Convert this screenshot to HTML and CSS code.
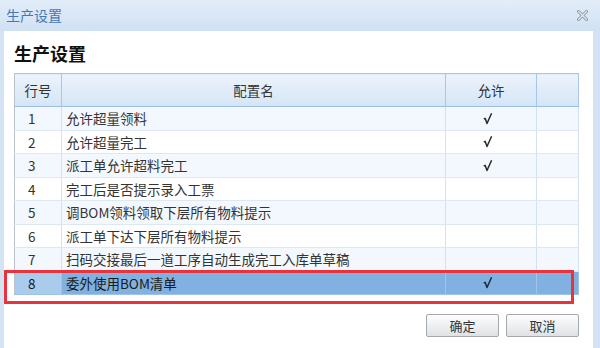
FILE: index.html
```html
<!DOCTYPE html>
<html lang="zh-CN">
  <head>
    <meta charset="UTF-8" />
    <title>生产设置</title>
    <link rel="stylesheet" href="styles.css">
  </head>
  <body>
    <div class="window">
      <div class="titlebar">
        <span class="win-title">生产设置</span>
        <svg class="close" width="11" height="11" viewBox="0 0 11 11">
          <path d="M1.5 1.5 L9.5 9.5 M9.5 1.5 L1.5 9.5" stroke="#8d949c" stroke-width="3" stroke-linecap="round" fill="none" />
          <path d="M1.5 1.5 L9.5 9.5 M9.5 1.5 L1.5 9.5" stroke="#e3ecf6" stroke-width="1.2" stroke-linecap="round" fill="none" />
        </svg>
      </div>
      <div class="panel">
        <div class="heading">生产设置</div>
        <table class="grid">
          <colgroup>
            <col class="c-no" />
            <col class="c-name" />
            <col class="c-ok" />
            <col class="c-pad" />
          </colgroup>
          <thead>
            <tr>
              <th>行号</th>
              <th>配置名</th>
              <th>允许</th>
              <th></th>
            </tr>
          </thead>
          <tbody>
            <tr class="alt"><td class="no">1</td><td>允许超量领料</td><td class="ok"><svg class="tick" width="10" height="13" viewBox="0 0 10 13"><path d="M0.8 7.2 L2.2 6.4 L4 11.5 L8.6 1.2" stroke="#2b2b2b" stroke-width="1.5" fill="none" stroke-linejoin="round" /></svg></td><td></td></tr>
            <tr><td class="no">2</td><td>允许超量完工</td><td class="ok"><svg class="tick" width="10" height="13" viewBox="0 0 10 13"><path d="M0.8 7.2 L2.2 6.4 L4 11.5 L8.6 1.2" stroke="#2b2b2b" stroke-width="1.5" fill="none" stroke-linejoin="round" /></svg></td><td></td></tr>
            <tr class="alt"><td class="no">3</td><td>派工单允许超料完工</td><td class="ok"><svg class="tick" width="10" height="13" viewBox="0 0 10 13"><path d="M0.8 7.2 L2.2 6.4 L4 11.5 L8.6 1.2" stroke="#2b2b2b" stroke-width="1.5" fill="none" stroke-linejoin="round" /></svg></td><td></td></tr>
            <tr><td class="no">4</td><td>完工后是否提示录入工票</td><td class="ok"></td><td></td></tr>
            <tr class="alt"><td class="no">5</td><td>调BOM领料领取下层所有物料提示</td><td class="ok"></td><td></td></tr>
            <tr><td class="no">6</td><td>派工单下达下层所有物料提示</td><td class="ok"></td><td></td></tr>
            <tr class="alt"><td class="no">7</td><td>扫码交接最后一道工序自动生成完工入库单草稿</td><td class="ok"></td><td></td></tr>
            <tr class="selected"><td class="no">8</td><td>委外使用BOM清单</td><td class="ok"><svg class="tick" width="10" height="13" viewBox="0 0 10 13"><path d="M0.8 7.2 L2.2 6.4 L4 11.5 L8.6 1.2" stroke="#1f2a38" stroke-width="1.5" fill="none" stroke-linejoin="round" /></svg></td><td></td></tr>
          </tbody>
        </table>
        <div class="mark"></div>
        <div class="actions">
          <button class="btn">确定</button>
          <button class="btn">取消</button>
        </div>
      </div>
    </div>
  </body>
</html>
```

FILE: styles.css
```css
body {
  margin: 0;
  background: #d4e3f4;
  font-family: "Noto Sans CJK SC", "Noto Sans", "Liberation Sans", sans-serif;
  color: #333;
}
.window {
  width: 600px;
  height: 348px;
  overflow: hidden;
  background: #d4e3f4;
}
.titlebar {
  height: 31px;
  display: flex;
  align-items: center;
  justify-content: space-between;
  padding: 0 12px 0 6px;
  background: linear-gradient(#e3edf9, #d0e1f3);
}
.win-title {
  font-size: 14px;
  color: #4178b8;
  margin-top: -2px;
}
.close {
  margin-top: -1px;
}
.panel {
  position: relative;
  margin: 0 7px 0 4px;
  height: 317px;
  background: #fff;
  padding: 10px 15px 0 10px;
  box-sizing: border-box;
}
.heading {
  font-size: 18px;
  font-weight: bold;
  line-height: 24px;
  color: #111;
  margin-bottom: 8px;
}
.grid {
  width: 564px;
  border-collapse: collapse;
  table-layout: fixed;
  font-size: 13.5px;
  border: 1px solid #b9c3ce;
}
.c-no { width: 47px; }
.c-name { width: 384px; }
.c-ok { width: 91px; }
.c-pad { width: 42px; }
.grid th {
  height: 32px;
  padding: 0;
  font-weight: normal;
  color: #333;
  background: linear-gradient(#ecf3fc, #d5e5f6);
  border-right: 1px solid #a7c7e8;
  border-bottom: 1px solid #9dc0e4;
}
.grid td {
  height: 23.5px;
  padding: 0 0 0 4px;
  box-sizing: border-box;
  border-right: 1px solid #d2e2f2;
  border-bottom: 1px solid #dce8f4;
  white-space: nowrap;
  line-height: 20px;
}
.grid td.no {
  padding-left: 13px;
}
.grid td.ok {
  text-align: center;
  padding: 0 6px 0 0;
}
.tick {
  display: block;
  margin: 0 auto;
}
.grid tr.alt td {
  background: #f3f8fe;
}
.grid tr.selected td {
  background: #80b1e0;
  color: #1a1a1a;
  border-color: #9fc4e8;
}
.grid tr.selected td.no {
  background: #a9cbec;
}
.mark {
  position: absolute;
  left: 0;
  top: 239px;
  width: 570px;
  height: 34px;
  box-sizing: border-box;
  border: 3px solid #e8333d;
}
.actions {
  display: flex;
  justify-content: flex-end;
  gap: 7px;
  margin: 19px -1px 0 0;
}
.btn {
  width: 73px;
  height: 23px;
  padding: 0;
  font-family: inherit;
  font-size: 13px;
  color: #333;
  border: 1px solid #a3a8ae;
  border-radius: 2px;
  background: linear-gradient(#fdfdfd, #dfe2e5);
}
```
